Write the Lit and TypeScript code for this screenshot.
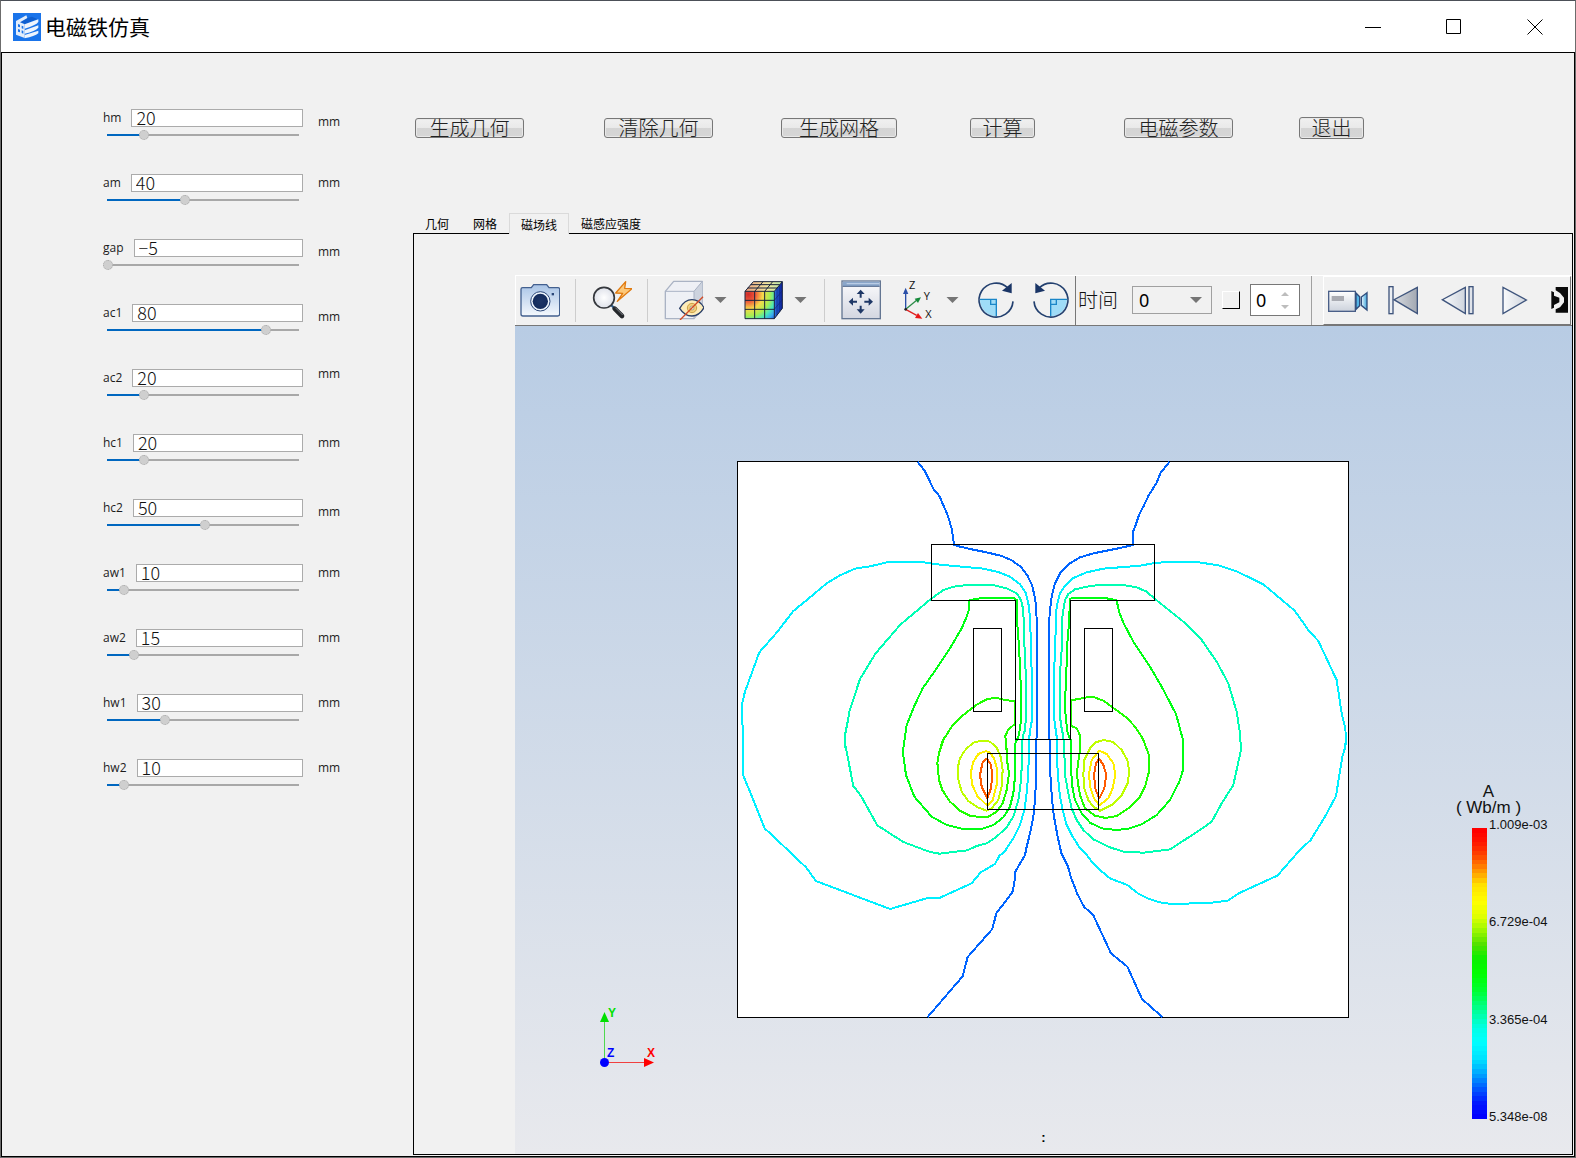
import { LitElement, html, svg, css, nothing } from "lit";
import { customElement, property, state } from "lit/decorators.js";
import { classMap } from "lit/directives/class-map.js";
import { styleMap } from "lit/directives/style-map.js";

interface Param {
  name: string;
  value: number;
  min: number;
  max: number;
  unit: "high" | "mid" | "low";
}

const PARAMS: Param[] = [
  { name: "hm", value: 20, min: 2, max: 96, unit: "low" },
  { name: "am", value: 40, min: 2, max: 96, unit: "mid" },
  { name: "gap", value: -5, min: -5, max: 96, unit: "low" },
  { name: "ac1", value: 80, min: 2, max: 96, unit: "low" },
  { name: "ac2", value: 20, min: 2, max: 96, unit: "high" },
  { name: "hc1", value: 20, min: 2, max: 96, unit: "mid" },
  { name: "hc2", value: 50, min: 2, max: 96, unit: "low" },
  { name: "aw1", value: 10, min: 2, max: 96, unit: "mid" },
  { name: "aw2", value: 15, min: 2, max: 96, unit: "mid" },
  { name: "hw1", value: 30, min: 2, max: 96, unit: "mid" },
  { name: "hw2", value: 10, min: 2, max: 96, unit: "mid" },
];

const ACTIONS = [
  { text: "生成几何", size: "medium" },
  { text: "清除几何", size: "medium" },
  { text: "生成网格", size: "large" },
  { text: "计算", size: "small" },
  { text: "电磁参数", size: "medium" },
  { text: "退出", size: "small tall" },
];

const TABS = ["几何", "网格", "磁场线", "磁感应强度"];

/* Contour lines of the vector potential, traced per quadrant of the domain. */
const QUADRANTS: { dx: number; dy: number; lines: [string, string][] }[] = [
  {
    dx: 0,
    dy: 0,
    lines: [
      ["#0064ff", "563,36 584,62 611,118 628,138 654,198 666,240 672,285 690,290 730,299 770,307 815,318 845,331 872,350 893,378 907,408 916,450 921,520 921,865"],
      ["#00f0ff", "39,900 39,830 36,820 36,762 45,725 65,670 88,607 140,548 190,483 228,452 290,400 330,376 375,356 420,349 470,337 490,336 575,336 605,341 650,346 760,356 805,366 840,380 870,403 888,430 897,470 901,520 903,620 906,680 906,810 902,830 897,868 897,900"],
      ["#00ffb4", "348,900 345,885 345,855 354,810 358,785 390,687 437,610 510,525 600,449 640,420 670,410 720,404 790,405 830,415 860,430 873,450 880,480 882,560 886,640 888,700 888,800 885,840 878,860 876,900"],
      ["#00ff14", "519,900 524,868 530,825 552,770 578,715 620,655 660,595 695,535 710,500 717,478 717,452 740,446 780,443 850,443 861,450 861,510 867,590 870,650 873,730 873,810 867,855 856,880 856,900"],
      ["#1eff00", "630,900 640,870 665,830 700,795 740,764 770,748 795,743 830,751 855,753 855,822 835,838 825,860 828,868 828,900"],
    ],
  },
  {
    dx: 930,
    dy: 0,
    lines: [
      ["#0064ff", "388,36 361,70 350,98 325,138 311,168 297,195 286,228 279,245 279,285 245,293 160,310 120,322 85,343 60,370 45,400 35,440 30,480 27,520 27,865 30,870 30,900"],
      ["#00f0ff", "51,900 50,860 45,825 42,800 42,660 46,600 47,520 50,470 60,430 75,408 98,385 140,367 190,356 300,347 345,339 380,336 470,336 535,346 590,364 670,403 764,482 805,540 835,573 890,690 905,790 916,835 918,870 915,900"],
      ["#00ffb4", "73,900 70,860 64,830 60,800 60,670 65,600 67,500 75,450 85,432 105,418 150,408 190,404 250,405 290,412 320,425 345,447 390,483 430,515 485,570 530,635 565,700 590,785 600,850 603,900"],
      ["#00ff14", "93,900 92,870 83,850 77,800 75,760 80,640 82,580 87,520 90,447 100,443 190,443 230,451 237,485 250,518 280,575 330,650 365,710 408,792 429,870 429,900"],
      ["#1eff00", "321,900 308,865 285,830 260,803 215,770 190,752 160,741 145,741 94,751 94,828 110,835 121,858 121,900"],
    ],
  },
  {
    dx: 0,
    dy: 810,
    lines: [
      ["#0064ff", "921,50 918,60 918,180 915,240 910,290 900,340 889,385 885,405 856,455 853,490 847,517 799,580 787,627 713,711 698,769 593,891"],
      ["#00f0ff", "39,60 39,165 60,215 104,325 150,368 228,442 258,483 480,567 590,535 628,534 725,490 752,457 795,432 808,408 825,393 850,355 870,315 883,270 890,220 894,170 897,100 897,70"],
      ["#00ffb4", "345,70 370,198 393,228 442,316 520,366 600,396 628,401 712,391 740,378 770,370 800,350 830,322 850,290 865,240 872,190 876,130 876,70"],
      ["#00ff14", "519,80 518,92 528,165 553,230 605,290 650,315 700,327 755,327 790,315 820,292 840,260 850,220 855,170 855,70"],
      ["#1eff00", "645,50 637,65 627,100 622,128 627,180 637,210 660,245 690,272 720,287 750,291 775,290 800,275 818,250 830,210 837,160 831,120 829,70"],
      ["#beff00", "705,90 730,68 755,62 780,65 800,83 812,110 818,150 815,200 805,240 785,265 770,272 745,263 715,243 695,215 684,175 684,140 690,115 705,90"],
      ["#fff000", "768,93 745,102 730,125 722,160 727,195 742,228 772,257 788,240 800,195 802,150 792,115 780,98 768,93"],
      ["#ff5a00", "770,113 757,130 750,165 755,200 772,235 783,205 787,165 783,135 770,113"],
    ],
  },
  {
    dx: 930,
    dy: 810,
    lines: [
      ["#0064ff", "30,60 30,150 33,190 36,240 42,290 52,345 64,400 84,440 92,470 112,522 132,560 160,586 213,700 262,740 306,837 367,891"],
      ["#00f0ff", "918,60 913,90 907,110 888,228 855,290 812,360 775,395 712,467 600,518 563,542 515,548 465,549 430,552 388,551 358,547 325,536 295,521 262,495 210,475 180,450 158,428 140,405 120,385 98,350 80,315 68,270 60,230 55,180 51,120 51,60"],
      ["#00ffb4", "603,65 603,90 580,195 545,250 515,305 480,330 390,388 310,398 250,395 210,382 160,358 130,330 110,300 95,265 85,220 76,170 73,100 73,60"],
      ["#00ff14", "429,60 429,150 418,185 390,240 350,285 305,313 265,326 230,330 185,325 150,308 125,280 105,240 95,190 93,90 92,60"],
      ["#1eff00", "304,50 310,60 327,105 327,155 315,200 300,230 270,262 230,288 197,294 165,287 135,265 120,225 113,185 111,155 117,110 121,80 121,50"],
      ["#beff00", "150,85 165,68 190,60 220,66 245,90 262,120 268,155 263,190 245,225 215,255 180,272 160,260 145,240 133,205 130,165 133,120 150,85"],
      ["#fff000", "178,92 200,102 220,130 226,165 218,205 205,235 178,256 162,235 150,200 147,160 155,120 178,92"],
      ["#ff5a00", "177,115 190,135 199,165 193,205 178,235 167,210 162,165 168,130 177,115"],
    ],
  },
];

const LEGEND_STOPS: [number, number[]][] = [
  [0, [255, 0, 0]],
  [0.04, [255, 20, 0]],
  [0.09, [255, 70, 0]],
  [0.14, [255, 145, 0]],
  [0.19, [255, 225, 0]],
  [0.25, [255, 255, 0]],
  [0.3, [225, 255, 0]],
  [0.34, [170, 250, 0]],
  [0.4, [80, 225, 0]],
  [0.45, [10, 240, 0]],
  [0.5, [0, 255, 0]],
  [0.56, [0, 255, 50]],
  [0.63, [0, 255, 150]],
  [0.69, [0, 255, 230]],
  [0.74, [0, 255, 255]],
  [0.8, [0, 225, 255]],
  [0.85, [0, 165, 255]],
  [0.9, [0, 90, 255]],
  [0.95, [0, 25, 255]],
  [1, [0, 0, 255]],
];

const BANDS = 64;

function bandColor(t: number): string {
  const i = Math.max(1, LEGEND_STOPS.findIndex(([p]) => p >= t));
  const [p0, c0] = LEGEND_STOPS[i - 1];
  const [p1, c1] = LEGEND_STOPS[i];
  const k = (t - p0) / (p1 - p0);
  return `rgb(${c0.map((c, n) => Math.round(c + (c1[n] - c) * k)).join(",")})`;
}

const icon = (x: number, body: unknown) =>
  html`<svg class="icon" viewBox="${x} 45 120 120" aria-hidden="true">${body}</svg>`;

const ICONS = {
  camera: icon(30, svg`
    <defs>
      <linearGradient id="cam" x1="0" y1="0" x2="0" y2="1"><stop offset="0" stop-color="#a9c4e6"/><stop offset="1" stop-color="#f4f8fd"/></linearGradient>
      <radialGradient id="lens"><stop offset="0" stop-color="#1d3566"/><stop offset="1" stop-color="#142c5c"/></radialGradient>
    </defs>
    <path d="M38 68H64L71 59H110L117 68H144Q149 68 149 73V147Q149 153 143 153H39Q33 153 33 147V73Q33 68 38 68Z" fill="url(#cam)" stroke="#43608f" stroke-width="4"/>
    <circle cx="91" cy="109" r="29" fill="#eef5fc" stroke="#2b4778" stroke-width="3"/>
    <circle cx="91" cy="109" r="23" fill="url(#lens)"/>
    <rect x="125" y="84" width="7" height="7" fill="#2b4778"/>`),
  magnify: icon(246, svg`
    <defs><radialGradient id="glass"><stop offset="0" stop-color="#ffffff"/><stop offset="1" stop-color="#dfe2ea"/></radialGradient></defs>
    <path d="M303 120L316 132" stroke="#2f5c8a" stroke-width="7"/>
    <path d="M314 131L336 153" stroke="#24272b" stroke-width="14" stroke-linecap="round"/>
    <path d="M316 128L338 150" stroke="#7b7f86" stroke-width="3"/>
    <circle cx="282" cy="98" r="31" fill="url(#glass)" stroke="#35383d" stroke-width="5"/>
    <path d="M347 50L317 84L338 85L322 109L366 71L344 70Z" fill="#fcc87a" stroke="#e07a10" stroke-width="4" stroke-linejoin="round"/>`),
  hide: icon(462, svg`
    <path d="M466 79L491 49H577V130L552 161H466Z" fill="#eef0f5" stroke="#aab3c4" stroke-width="4" stroke-linejoin="round"/>
    <path d="M552 79L577 49V130L552 161Z" fill="#cdd3de"/>
    <path d="M466 79H552V161M552 79L577 49" fill="none" stroke="#aab3c4" stroke-width="3"/>
    <path d="M509 130Q524 104 546 104Q568 104 582 128Q568 153 546 153Q524 153 509 130Z" fill="#fdecb8" stroke="#2a3f68" stroke-width="4"/>
    <circle cx="546" cy="129" r="14" fill="#f3cf7a" stroke="#caa14a" stroke-width="3"/>
    <circle cx="546" cy="129" r="6" fill="#fdf3d0" stroke="#8a8a7a" stroke-width="2"/>
    <path d="M579 95L510 165" stroke="#d24a24" stroke-width="4"/>`),
  mesh: icon(702, svg`
    <defs>
      <radialGradient id="heat" gradientUnits="userSpaceOnUse" cx="715" cy="88" r="108">
        <stop offset="0" stop-color="#cf2a2a"/><stop offset=".2" stop-color="#ee5a3a"/><stop offset=".4" stop-color="#f8d84a"/>
        <stop offset=".6" stop-color="#a8ee50"/><stop offset=".75" stop-color="#48e8b8"/><stop offset=".88" stop-color="#38a8f0"/><stop offset="1" stop-color="#2050d8"/>
      </radialGradient>
      <linearGradient id="lid"><stop offset="0" stop-color="#e8a080"/><stop offset=".6" stop-color="#f4e8a0"/><stop offset="1" stop-color="#b8e8a8"/></linearGradient>
      <linearGradient id="side" x1="0" y1="0" x2="1" y2="0"><stop offset="0" stop-color="#2a70e0"/><stop offset="1" stop-color="#0c1f9c"/></linearGradient>
    </defs>
    <path d="M705 79H793V161H705Z" fill="url(#heat)"/>
    <path d="M705 79L730 50H817L793 79Z" fill="url(#lid)"/>
    <path d="M793 79L817 50V130L793 161Z" fill="url(#side)"/>
    <path d="M801 69V151M809 59V141M793 106L817 77M793 133L817 104" fill="none" stroke="#12257c" stroke-width="2"/>
    <path d="M705 79H793V161H705ZM705 106H793M705 133H793M734 79V161M764 79V161M705 79L730 50H817L793 79M734 79L759 50M764 79L788 50M713 69H801M722 59H809M817 50V130L793 161" fill="none" stroke="#18223c" stroke-width="3"/>`),
  fit: icon(63, svg`
    <defs><linearGradient id="pane" x1="0" y1="0" x2="0" y2="1"><stop offset="0" stop-color="#fbfbfd"/><stop offset="1" stop-color="#d3d6e0"/></linearGradient></defs>
    <rect x="66" y="48" width="115" height="113" fill="url(#pane)" stroke="#647692" stroke-width="4"/>
    <rect x="68" y="50" width="111" height="13" fill="#8aa6ca"/>
    <path d="M68 64H179" stroke="#4a6288" stroke-width="3"/>
    <path d="M80 56H178" stroke="#c2d4ea" stroke-width="3"/>
    <path d="M122 74L134 87H125V98H119V87H110ZM122 146L134 133H125V122H119V133H110ZM86 110L99 98V107H111V113H99V122ZM159 110L146 98V107H133V113H146V122Z" fill="#1e3766"/>`),
  axes: icon(228, svg`
    <path d="M257 133V84" stroke="#2a4fa8" stroke-width="4"/><path d="M257 68L249 87H265Z" fill="#2a4fa8"/>
    <path d="M257 133L290 106" stroke="#2c8c48" stroke-width="4"/><path d="M303 97L284 101L294 114Z" fill="#168a3a"/>
    <path d="M257 133L290 151" stroke="#e02020" stroke-width="4"/><path d="M307 161L285 159L294 144Z" fill="#e81818"/>
    <circle cx="257" cy="133" r="4" fill="#222"/>
    <text x="267" y="72">Z</text><text x="311" y="105">Y</text><text x="316" y="158">X</text>`),
};

const rotateShape = svg`
  <path d="M480 103H529V154A50 50 0 0 1 480 103Z" fill="#9fdcf7"/>
  <path d="M480 103H529V154M512 103V118H529" fill="none" stroke="#1a86c8" stroke-width="4"/>
  <path d="M579 109A51 51 0 1 1 564 69" fill="none" stroke="#23406f" stroke-width="5"/>
  <path d="M575 54V85L546 77Z" fill="#1a3566"/>`;

const barGradient = svg`<defs><linearGradient id="steel"><stop offset="0" stop-color="#fafbfc"/><stop offset="1" stop-color="#cfd5de"/></linearGradient>
  <linearGradient id="solid"><stop offset="0" stop-color="#d8dbe0"/><stop offset="1" stop-color="#a2a8b2"/></linearGradient></defs>`;

const PLAYER = [
  {
    label: "录制",
    icon: icon(414, svg`
      <defs>
        <linearGradient id="vid" x1="0" y1="0" x2="0" y2="1"><stop offset="0" stop-color="#ffffff"/><stop offset="1" stop-color="#ccd2dc"/></linearGradient>
        <linearGradient id="horn"><stop offset="0" stop-color="#eaf7fe"/><stop offset="1" stop-color="#3fa6dc"/></linearGradient>
      </defs>
      <rect x="416" y="79" width="80" height="60" fill="url(#vid)" stroke="#4a5f88" stroke-width="4"/>
      <rect x="425" y="93" width="37" height="15" fill="#a9abb2"/>
      <path d="M498 84L509 95V122L498 133Z" fill="#55b4e6" stroke="#2f4c7c" stroke-width="4"/>
      <path d="M531 83L514 96V121L531 135Z" fill="url(#horn)" stroke="#2f4c7c" stroke-width="4"/>`),
  },
  {
    label: "第一帧",
    icon: icon(579, svg`${barGradient}
      <rect x="597" y="65" width="12" height="81" fill="#eceff3" stroke="#3f557d" stroke-width="4"/>
      <path d="M682 67V146L612 104Z" fill="url(#solid)" stroke="#3f557d" stroke-width="4"/>`),
  },
  {
    label: "上一帧",
    icon: icon(744, svg`${barGradient}
      <path d="M826 67V146L757 104Z" fill="url(#steel)" stroke="#3f557d" stroke-width="4"/>
      <rect x="837" y="65" width="12" height="81" fill="#dfe3ea" stroke="#3f557d" stroke-width="4"/>`),
  },
  {
    label: "播放",
    icon: icon(909, svg`${barGradient}
      <path d="M939 67V146L1009 105Z" fill="url(#steel)" stroke="#3f557d" stroke-width="4"/>`),
  },
  {
    label: "更多",
    icon: icon(1074, svg`
      <path d="M1097 66H1134V143H1097V133L1110 127L1122 112V98L1110 84L1097 76Z" fill="#0a0a0a"/>
      <path d="M1084 78L1092 82V92L1108 98V112L1092 120V128L1084 132Z" fill="#0a0a0a"/>`),
  },
];

/** Labelled value with its slider. */
@customElement("param-field")
export class ParamField extends LitElement {
  @property({ attribute: false }) param!: Param;
  @state() private value = 0;

  static styles = css`
    :host { display: block; }
    .row { display: grid; grid-template-columns: 200px auto; column-gap: 15px; align-items: start; }
    .line { display: flex; align-items: center; gap: 10px; height: 18px; }
    .name, .unit { font: 12px/18px "Open Sans", "Noto Sans", sans-serif; color: #1c1c1c; }
    .box {
      flex: 1; min-width: 0; box-sizing: border-box; height: 18px; margin: 0; padding: 0 0 2px 4px;
      border: 1px solid #ababab; border-radius: 0; background: #fff; outline: none;
      font: 300 18px/20px "Noto Sans CJK SC", sans-serif; color: #111;
    }
    .slider {
      -webkit-appearance: none; appearance: none; display: block; width: 100%; height: 12px; margin: 2px 0 0;
      background:
        linear-gradient(#0067c0, #0067c0) 4px center / calc(1px + (100% - 10px) * var(--fill)) 2px no-repeat,
        linear-gradient(#a8a8a8, #a8a8a8) 4px center / calc(100% - 8px) 2px no-repeat;
    }
    .slider::-webkit-slider-thumb {
      -webkit-appearance: none; width: 10px; height: 10px; box-sizing: border-box;
      border: 1px dotted #a8a8a8; border-radius: 50%; background: #cfcfcf;
    }
    .cell { display: flex; height: 26px; margin-top: -4px; }
    .high { align-self: flex-start; }
    .mid { align-self: center; }
    .low { align-self: flex-end; }
  `;

  willUpdate(changed: Map<string, unknown>) {
    if (changed.has("param")) this.value = this.param.value;
  }

  private onInput(e: Event) {
    this.value = Number((e.target as HTMLInputElement).value);
  }

  render() {
    const p = this.param;
    const fill = (this.value - p.min) / (p.max - p.min);
    return html`
      <div class="row">
        <div>
          <div class="line">
            <label class="name" for="value">${p.name}</label>
            <input class="box" id="value" type="text" .value=${String(this.value).replace("-", "−")} />
          </div>
          <input class="slider" type="range" aria-label=${p.name} min=${p.min} max=${p.max}
            .value=${String(this.value)} @input=${this.onInput} style=${styleMap({ "--fill": String(fill) })} />
        </div>
        <div class="cell"><span class="unit ${p.unit}">mm</span></div>
      </div>`;
  }
}

/** Field line plot with its colour scale and axis triad. */
@customElement("field-view")
export class FieldView extends LitElement {
  static styles = css`
    :host {
      display: flex; flex-direction: column; align-items: center; position: relative; flex: 1;
      padding-top: 135px; background: linear-gradient(#b8cce4, #e8e9ed); overflow: hidden;
    }
    .plot { display: block; width: 613px; height: 557px; shape-rendering: crispEdges; }
    .plot polyline { fill: none; stroke-width: 6; stroke-linejoin: round; }
    .domain { fill: #fff; }
    .edge { fill: none; }
    .domain, .edge { stroke: #000; stroke-width: 3; }
    .caption { margin: auto 0 9px; font: bold 13px/14px "Liberation Sans", sans-serif; color: #000; }
    .triad { position: absolute; left: 83px; bottom: 83px; width: 64px; height: 66px; }
    .triad text { font: bold 12px "Liberation Sans", sans-serif; }
    .legend {
      position: absolute; right: 25px; bottom: 35px; display: grid; grid-template-columns: 15px 58px; column-gap: 2px;
      color: #111; white-space: nowrap;
    }
    .heading { grid-column: 1 / 3; justify-self: center; margin: 0 42px 12px 0; font: 17px/16px "Liberation Sans", sans-serif; text-align: center; }
    .bar { display: block; width: 15px; height: 291px; shape-rendering: crispEdges; }
    .ticks { display: flex; flex-direction: column; justify-content: space-between; margin: -10px 0 -5px; padding: 0; list-style: none; font: 13px/14px "Liberation Sans", sans-serif; }
  `;

  render() {
    return html`
      <svg class="plot" viewBox="21 33 1839 1671" role="img" aria-label="磁场线">
        <rect class="domain" x="22.5" y="34.5" width="1833" height="1668" />
        ${QUADRANTS.map((q) => svg`<g transform="translate(${q.dx} ${q.dy})">
          ${q.lines.map(([color, points]) => svg`<polyline points=${points} stroke=${color} />`)}</g>`)}
        <path class="edge" d="M604.5 283.5H1273.5V451.5H1021.5V868.5H856.5V451.5H604.5Z" />
        <rect class="edge" x="730.5" y="535.5" width="84" height="249" />
        <rect class="edge" x="1063.5" y="535.5" width="84" height="249" />
        <rect class="edge" x="772.5" y="910.5" width="333" height="168" />
      </svg>
      <p class="caption">:</p>
      <svg class="triad" viewBox="0 0 64 66" aria-hidden="true">
        <path d="M6.5 58V12" stroke="#4fd84f" /><path d="M6.5 7L11 17H2Z" fill="#00e000" />
        <path d="M6 57.5H48" stroke="#f04040" /><path d="M56 57.5L46 53V62Z" fill="#f00" />
        <circle cx="6.5" cy="57.5" r="4.5" fill="#00f" />
        <text x="10" y="12" fill="#00e000">Y</text>
        <text x="9" y="52" fill="#00f">Z</text>
        <text x="49" y="52" fill="#f00">X</text>
      </svg>
      <div class="legend">
        <div class="heading">A<br />( Wb/m )</div>
        <svg class="bar" viewBox="0 0 15 ${BANDS}" preserveAspectRatio="none" aria-hidden="true">
          ${Array.from({ length: BANDS }, (_, i) => svg`<rect y=${i} width="15" height="1" fill=${bandColor(i / (BANDS - 1))} />`)}
        </svg>
        <ul class="ticks"><li>1.009e-03</li><li>6.729e-04</li><li>3.365e-04</li><li>5.348e-08</li></ul>
      </div>`;
  }
}

@customElement("app-root")
export class AppRoot extends LitElement {
  @state() private tab = 2;

  static styles = css`
    :host {
      display: flex; flex-direction: column; box-sizing: border-box; min-height: 100vh;
      border: 1px solid #6c6c6c; border-top-color: #4c5058; background: #f1f1f1; color: #111;
      font-family: "Noto Sans CJK SC", sans-serif;
    }
    button { margin: 0; padding: 0; border: 0; background: none; color: inherit; font: inherit; }
    .titlebar { display: flex; align-items: center; height: 51px; padding-left: 12px; background: #fff; }
    .logo { width: 28px; height: 28px; margin-right: 4px; }
    .title { flex: 1; margin: 0; padding-bottom: 2px; font-size: 21px; font-weight: 400; line-height: 28px; color: #000; }
    .win { display: grid; place-items: center; width: 81px; height: 51px; }
    .win svg { width: 16px; height: 16px; fill: none; stroke: #000; }
    .body { flex: 1; display: flex; border: 1px solid #000; }
    .side { display: flex; flex-direction: column; gap: 33px; width: 310px; padding: 56px 0 0 101px; }
    .main { flex: 1; min-width: 0; display: flex; flex-direction: column; padding: 64px 1px 1px 0; }
    .actions {
      display: grid; grid-template-columns: 189fr 177fr 189fr 154fr 175fr 274fr; align-items: center; justify-items: start;
      height: 22px; padding-left: 2px;
    }
    .act {
      display: flex; align-items: center; justify-content: center; box-sizing: border-box; height: 20px;
      border: 1px solid #777; border-radius: 3px; background: linear-gradient(#f0f0f0, #e9e9e9 50%, #d4d4d4 50%, #d6d6d6);
      font-size: 20px; font-weight: 300; line-height: 20px; color: #222; box-shadow: inset 0 0 0 1px #e8e8e8;
      white-space: nowrap;
    }
    .small { width: 65px; }
    .medium { width: 109px; }
    .large { width: 116px; }
    .tall { height: 22px; }
    .tabs { display: flex; height: 20px; margin-top: 74px; position: relative; }
    .tab { box-sizing: border-box; height: 20px; padding: 2px 12px 0; font-size: 12px; line-height: 18px; color: #000; }
    .tab.on { height: 21px; padding: 1px 11px 0; border: 1px solid #dadada; border-bottom: 0; background: #f1f1f1; }
    .panel { flex: 1; display: flex; flex-direction: column; padding: 41px 0 0 101px; border: 1px solid #000; }
    .toolbar { display: flex; box-sizing: border-box; height: 51px; border-top: 1px solid #fff; border-bottom: 1px solid #777; }
    .tools { display: flex; align-items: center; gap: 15px; padding: 0 4px 1px; border-left: 1px solid #fff; }
    .tool { display: flex; align-items: center; }
    .icon { display: block; width: 40px; height: 40px; }
    .icon text { font: 33px "Open Sans", sans-serif; fill: #111; }
    .sep { width: 1px; height: 43px; margin-right: 1px; background: #cdcdcd; }
    .drop { display: block; box-sizing: content-box; width: 13px; height: 6px; padding: 0 2px 0 10px; fill: #757575; }
    .time { display: flex; align-items: center; gap: 10px; padding: 0 11px 1px 2px; border-left: 1px solid #777; border-right: 1px solid #a0a0a0; }
    .time label { margin-right: 4px; font-size: 20px; font-weight: 300; line-height: 28px; }
    .pick { display: grid; align-items: center; }
    .pick select {
      grid-area: 1 / 1; appearance: none; width: 80px; height: 28px; padding: 0 0 0 6px; box-sizing: border-box;
      border: 1px solid #a0a0a0; border-radius: 0; background: none; font: 18px "Noto Sans", sans-serif; color: #000;
    }
    .pick .drop { grid-area: 1 / 1; justify-self: end; width: 12px; padding: 0 10px 0 0; pointer-events: none; }
    .stop { width: 18px; height: 18px; border: 1px solid #fff; border-right: 1px solid #000; border-bottom: 1px solid #000; }
    .spin { display: flex; align-items: center; box-sizing: border-box; width: 50px; height: 32px; padding: 0 10px 0 5px; border: 1px solid #777; background: #fff; }
    .spin input {
      appearance: textfield; flex: 1; min-width: 0; width: 100%; padding: 0; border: 0; outline: none; background: none;
      font: 18px "Noto Sans", sans-serif; color: #000;
    }
    .spin input::-webkit-inner-spin-button { display: none; }
    .spin svg { width: 8px; height: 17px; fill: #bdbdbd; }
    .player {
      flex: 1; min-width: 0; display: flex; align-items: center; gap: 15px; overflow: hidden; margin: 0 1px 0 11px; padding: 0 0 1px 4px;
      border: 1px solid #fff; border-right: 1px solid #777; border-bottom: 1px solid #777;
    }
  `;

  private sep() {
    return html`<span class="sep"></span>`;
  }

  private tool(label: string, glyph: unknown, drop = false) {
    return html`<button class="tool" aria-label=${label}>${glyph}${drop ? this.arrow() : nothing}</button>`;
  }

  private arrow() {
    return html`<svg class="drop" viewBox="0 0 12 6" aria-hidden="true"><path d="M0 0H12L6 6Z" /></svg>`;
  }

  render() {
    return html`
      <header class="titlebar">
        <svg class="logo" viewBox="39 36 84 84" aria-hidden="true">
          <rect x="39" y="36" width="84" height="84" fill="#1a74ea" />
          <path d="M82 51L96 47L112 54L76 69L60 64Z" fill="#0f5fd0" />
          <path d="M48 60L79 43L82 51L60 64L74 70V111L48 101Z" fill="#e3edfb" />
          <path d="M54 69L60 71V79L54 77ZM54 84L60 86V94L54 92ZM65 74L70 76V84L65 82ZM65 88L70 90V98L65 96Z" fill="#1a74ea" />
          <path d="M74 70L115 55V63Q108 73 74 83ZM74 88L115 73V80Q106 90 74 98ZM74 102L115 89V97Q104 106 74 112Z" fill="#eef4fd" />
        </svg>
        <h1 class="title">电磁铁仿真</h1>
        <button class="win" aria-label="最小化"><svg viewBox="0 0 16 16"><path d="M0 8.5H16" /></svg></button>
        <button class="win" aria-label="最大化"><svg viewBox="0 0 16 16"><path d="M.5 .5H14.5V14.5H.5Z" /></svg></button>
        <button class="win" aria-label="关闭"><svg viewBox="0 0 16 16"><path d="M.5 .5L15.5 15.5M15.5 .5L.5 15.5" /></svg></button>
      </header>
      <div class="body">
        <aside class="side">${PARAMS.map((p) => html`<param-field .param=${p}></param-field>`)}</aside>
        <main class="main">
          <div class="actions">${ACTIONS.map((a) => html`<button class="act ${a.size}">${a.text}</button>`)}</div>
          <div class="tabs" role="tablist">
            ${TABS.map((t, i) => html`<button role="tab" aria-selected=${i === this.tab} class=${classMap({ tab: true, on: i === this.tab })}
              @click=${() => (this.tab = i)}>${t}</button>`)}
          </div>
          <section class="panel">
            <div class="toolbar">
              <div class="tools">
                ${this.tool("截图", ICONS.camera)}${this.sep()}
                ${this.tool("缩放", ICONS.magnify)}${this.sep()}
                ${this.tool("隐藏", ICONS.hide, true)}
                ${this.tool("显示", ICONS.mesh, true)}${this.sep()}
                ${this.tool("适应窗口", ICONS.fit)}
                ${this.tool("视图方向", ICONS.axes, true)}
                ${this.tool("顺时针旋转", icon(468, rotateShape))}
                ${this.tool("逆时针旋转", icon(633, svg`<g transform="translate(1221 0) scale(-1 1)">${rotateShape}</g>`))}
              </div>
              <div class="time">
                <label for="time">时间</label>
                <span class="pick"><select id="time"><option>0</option></select>${this.arrow()}</span>
                <button class="stop" aria-label="停止"></button>
                <span class="spin">
                  <input type="number" value="0" aria-label="帧" />
                  <svg viewBox="0 0 8 17" aria-hidden="true"><path d="M0 4L4 0L8 4ZM0 13L4 17L8 13Z" /></svg>
                </span>
              </div>
              <div class="player">${PLAYER.map((b) => this.tool(b.label, b.icon))}</div>
            </div>
            <field-view></field-view>
          </section>
        </main>
      </div>`;
  }
}
